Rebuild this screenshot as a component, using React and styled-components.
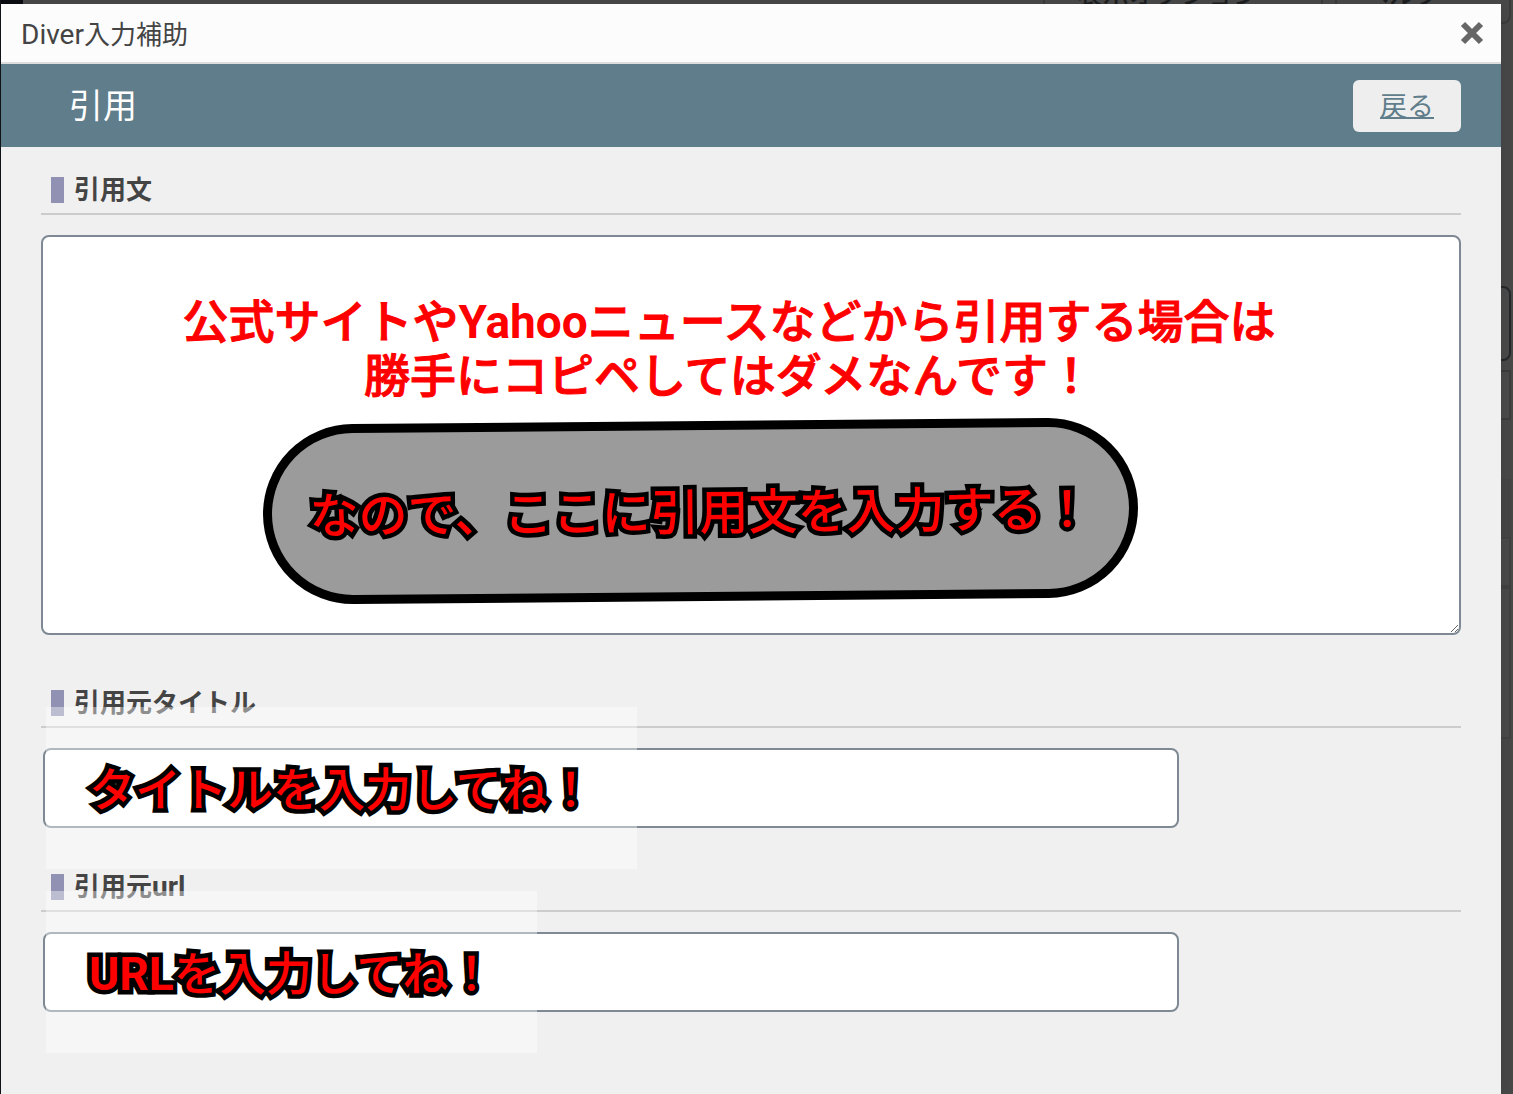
import React from "react";
import styled, { createGlobalStyle } from "styled-components";

const App = () => {
  return (
    <>
      <GlobalStyle />
      <Page>
        <Behind aria-hidden="true">
          <Corner />
          <ScreenTabs>
            <ScreenTab>表示オプション</ScreenTab>
            <ScreenTab $last>ヘルプ</ScreenTab>
          </ScreenTabs>
          <SideBoxes>
            <SideBox $height={75} $space={9} $color="#25282b" $radius={8} />
            <SideBox $height={50} $space={59} $color="#3c3c3c" />
            <SideBox $height={58} $color="#444" $fill="#444" />
            <SideBox $height={50} $color="#414141" />
            <SideBox $height={152} $color="#414141" />
          </SideBoxes>
        </Behind>
        <Modal role="dialog" aria-labelledby="modal-title">
          <ModalHeader>
            <ModalTitle id="modal-title">
              <Latin>Diver</Latin>入力補助
            </ModalTitle>
            <CloseButton type="button" aria-label="閉じる">
              <svg width="24" height="24" viewBox="0 0 24 24">
                <path
                  d="M3 3L21 21M21 3L3 21"
                  stroke="#666"
                  strokeWidth="6"
                  fill="none"
                />
              </svg>
            </CloseButton>
          </ModalHeader>
          <Toolbar>
            <h2>引用</h2>
            <BackLink href="#back">戻る</BackLink>
          </Toolbar>
          <Form>
            <Field $space={45}>
              <Label htmlFor="quote">引用文</Label>
              <Control>
                <TextArea id="quote" />
                <Message>
                  <p>
                    公式サイトや<b>Yahoo</b>ニュースなどから引用する場合は
                    <br />
                    勝手にコピペしてはダメなんです！
                  </p>
                  <Pill>なので、ここに引用文を入力する！</Pill>
                </Message>
              </Control>
            </Field>
            <Field $space={36}>
              <Label htmlFor="title">引用元タイトル</Label>
              <Control>
                <Input id="title" type="text" />
                <Note>タイトルを入力してね！</Note>
              </Control>
            </Field>
            <Field $space={36}>
              <Label htmlFor="url">
                <span>
                  引用元<Latin>url</Latin>
                </span>
              </Label>
              <Control>
                <Input id="url" type="text" />
                <Note>
                  <b>URL</b>を入力してね！
                </Note>
              </Control>
            </Field>
          </Form>
        </Modal>
      </Page>
    </>
  );
};

const GlobalStyle = createGlobalStyle`
  * {
    margin: 0;
    padding: 0;
    box-sizing: border-box;
  }
  body {
    background: #484848;
    color: #444;
    font-family: "Noto Sans CJK JP", sans-serif;
    font-size: 26px;
  }
`;

const Page = styled.div`
  position: relative;
  display: flex;
  min-height: 100vh;
  padding: 4px 12px 0 1px;
  overflow: hidden;
`;

const Behind = styled.div`
  position: absolute;
  inset: 0;
  overflow: hidden;
  border-left: 1px solid #101418;
`;

const Corner = styled.div`
  width: 22px;
  height: 4px;
  background: #0c0d12;
`;

const ScreenTabs = styled.div`
  position: absolute;
  top: -33px;
  right: 2px;
  display: flex;
  gap: 12px;
`;

const ScreenTab = styled.div`
  width: ${(props) => (props.$last ? 176 : 280)}px;
  height: 57px;
  padding: 0 ${(props) => (props.$last ? 26 : 32)}px;
  border: 2px solid #3a3b3c;
  border-radius: 0 0 8px 8px;
  color: #1c1e20;
  font-weight: 500;
  line-height: 48px;
`;

const SideBoxes = styled.div`
  display: flex;
  flex-direction: column;
  align-items: flex-end;
  padding: 282px 2px 0;
`;

const SideBox = styled.div`
  width: 60px;
  height: ${(props) => props.$height}px;
  margin-bottom: ${(props) => props.$space || 0}px;
  border: 2px solid ${(props) => props.$color};
  border-radius: ${(props) => props.$radius || 0}px;
  background: ${(props) => props.$fill || "#4a4a4a"};
`;

const Modal = styled.div`
  position: relative;
  flex: 1;
  background: #f0f0f0;
  box-shadow: 0 4px 16px rgba(0, 0, 0, 0.1);
`;

const ModalHeader = styled.header`
  display: flex;
  align-items: center;
  justify-content: space-between;
  height: 60px;
  padding: 0 17px 0 20px;
  background: #fcfcfc;
  border-bottom: 2px solid #ddd;
`;

const ModalTitle = styled.h1`
  font-size: 26px;
  font-weight: 400;
  line-height: 56px;
`;

const Latin = styled.span`
  font-family: Roboto, sans-serif;
  font-size: 28px;
  line-height: 1px;
`;

const CloseButton = styled.button`
  display: flex;
  border: none;
  background: none;
  cursor: pointer;
`;

const Toolbar = styled.div`
  display: flex;
  align-items: center;
  justify-content: space-between;
  height: 83px;
  padding: 0 40px 0 68px;
  background: #607d8b;
  color: #fff;
  h2 {
    padding-bottom: 4px;
    font-size: 34px;
    font-weight: 400;
  }
`;

const BackLink = styled.a`
  padding: 0 27px 2px;
  border-radius: 6px;
  background: #eee;
  color: #607d8b;
  font-size: 27px;
  line-height: 50px;
  text-underline-offset: 1px;
`;

const Form = styled.form`
  padding: 20px 40px;
`;

const Field = styled.div`
  margin-bottom: ${(props) => props.$space}px;
`;

const Label = styled.label`
  display: flex;
  align-items: flex-start;
  padding: 10px;
  border-bottom: 2px solid #ccc;
  font-weight: 700;
  line-height: 22px;
  &::before {
    content: "";
    width: 13px;
    height: 26px;
    margin-right: 10px;
    background: #9192b3;
  }
`;

const Control = styled.div`
  position: relative;
  margin-top: 20px;
`;

const TextArea = styled.textarea`
  display: block;
  width: 100%;
  height: 400px;
  padding: 16px;
  border: 2px solid #7e8993;
  border-radius: 8px;
  background: #fff;
  font: inherit;
`;

const Input = styled.input`
  display: block;
  width: 80%;
  height: 80px;
  margin: 0 2px;
  padding: 0 16px;
  border: 2px solid #7e8993;
  border-radius: 8px;
  background: #fff;
  font: inherit;
`;

const Message = styled.div`
  position: absolute;
  top: 56px;
  left: 138px;
  width: 1100px;
  color: #f00;
  font-size: 46px;
  font-weight: 500;
  line-height: 54px;
  text-align: center;
  white-space: nowrap;
  pointer-events: none;
  p {
    -webkit-text-stroke: 1px #f00;
  }
  b {
    font-family: Roboto, sans-serif;
    font-weight: 700;
    line-height: 1px;
    -webkit-text-stroke: 0;
  }
`;

const Pill = styled.div`
  display: flex;
  align-items: center;
  justify-content: center;
  width: 875px;
  height: 180px;
  margin: 22px 0 0 84px;
  padding-bottom: 4px;
  border: 9px solid #000;
  border-radius: 90px;
  background: #9b9b9b;
  font-size: 49px;
  -webkit-text-stroke: 9px #000;
  paint-order: stroke fill;
  transform: rotate(-0.5deg);
`;

const Note = styled.div`
  position: absolute;
  top: 50%;
  left: 5px;
  padding: 52px 43px 56px;
  background: rgba(255, 255, 255, 0.4);
  color: #f00;
  font-size: 46px;
  font-weight: 500;
  line-height: 54px;
  white-space: nowrap;
  -webkit-text-stroke: 9px #000;
  paint-order: stroke fill;
  transform: translateY(-50%);
  pointer-events: none;
  b {
    font-family: Roboto, sans-serif;
    font-weight: 700;
    line-height: 1px;
  }
`;

export default App;
